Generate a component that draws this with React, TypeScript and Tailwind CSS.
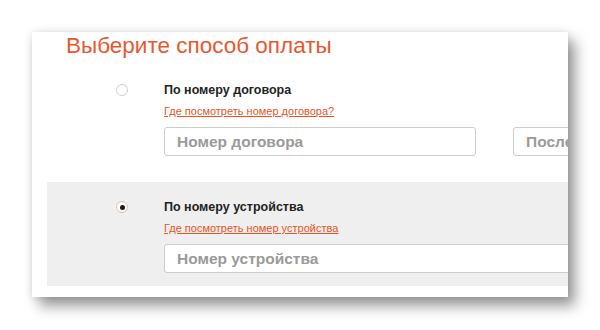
import React from 'react';

function Radio({ checked }: { checked?: boolean }) {
  return (
    <span
      className={
        'flex h-[12px] w-[12px] shrink-0 items-center justify-center rounded-full border bg-white ' +
        (checked ? 'border-[#dcc3ad]' : 'border-[#cfcfcf]')
      }
    >
      {checked && <span className="h-[5px] w-[5px] rounded-full bg-[#1a1a1a]" />}
    </span>
  );
}

function Field({ placeholder, width }: { placeholder: string; width: string }) {
  return (
    <input
      readOnly
      placeholder={placeholder}
      className={
        width +
        ' h-[29px] shrink-0 rounded-[3px] border border-[#cccccc] bg-white pl-[12px] text-[15.5px] font-bold text-[#333] outline-none placeholder:text-[#9a9a9a]'
      }
    />
  );
}

function Option({
  checked,
  label,
  link,
  children,
  grey,
}: {
  checked?: boolean;
  label: string;
  link: string;
  children: React.ReactNode;
  grey?: boolean;
}) {
  return (
    <div className={'ml-[15px] flex w-[900px] pb-[13px] pl-[69px] pt-[17px] ' + (grey ? 'bg-[#efefef]' : '')}>
      <div className="flex h-[16px] items-center">
        <Radio checked={checked} />
      </div>
      <div className="ml-[36px] flex flex-col">
        <div className="text-[12.5px] font-bold leading-[16px] text-[#222]">{label}</div>
        <a className="mt-[6px] text-[11px] leading-[14px] text-[#e8541f] underline" href="#">
          {link}
        </a>
        <div className="mt-[9px] flex gap-[37px]">{children}</div>
      </div>
    </div>
  );
}

export default function App() {
  return (
    <div className="h-[330px] w-[600px] bg-white pl-[32px] pt-[32px] font-['Liberation_Sans',Arial,sans-serif]">
      <div className="h-[265px] w-[536px] overflow-hidden bg-white shadow-[7px_9px_13px_rgba(0,0,0,0.4),0_0_8px_rgba(0,0,0,0.12)]">
        <h1 className="h-[33px] pl-[34px] text-[22.5px] font-normal leading-[27px] text-[#e9572d]">
          Выберите способ оплаты
        </h1>
        <Option label="По номеру договора" link="Где посмотреть номер договора?">
          <Field placeholder="Номер договора" width="w-[312px]" />
          <Field placeholder="Последние цифры" width="w-[312px]" />
        </Option>
        <div className="h-[13px]" />
        <Option checked grey label="По номеру устройства" link="Где посмотреть номер устройства">
          <Field placeholder="Номер устройства" width="w-[661px]" />
        </Option>
      </div>
    </div>
  );
}
